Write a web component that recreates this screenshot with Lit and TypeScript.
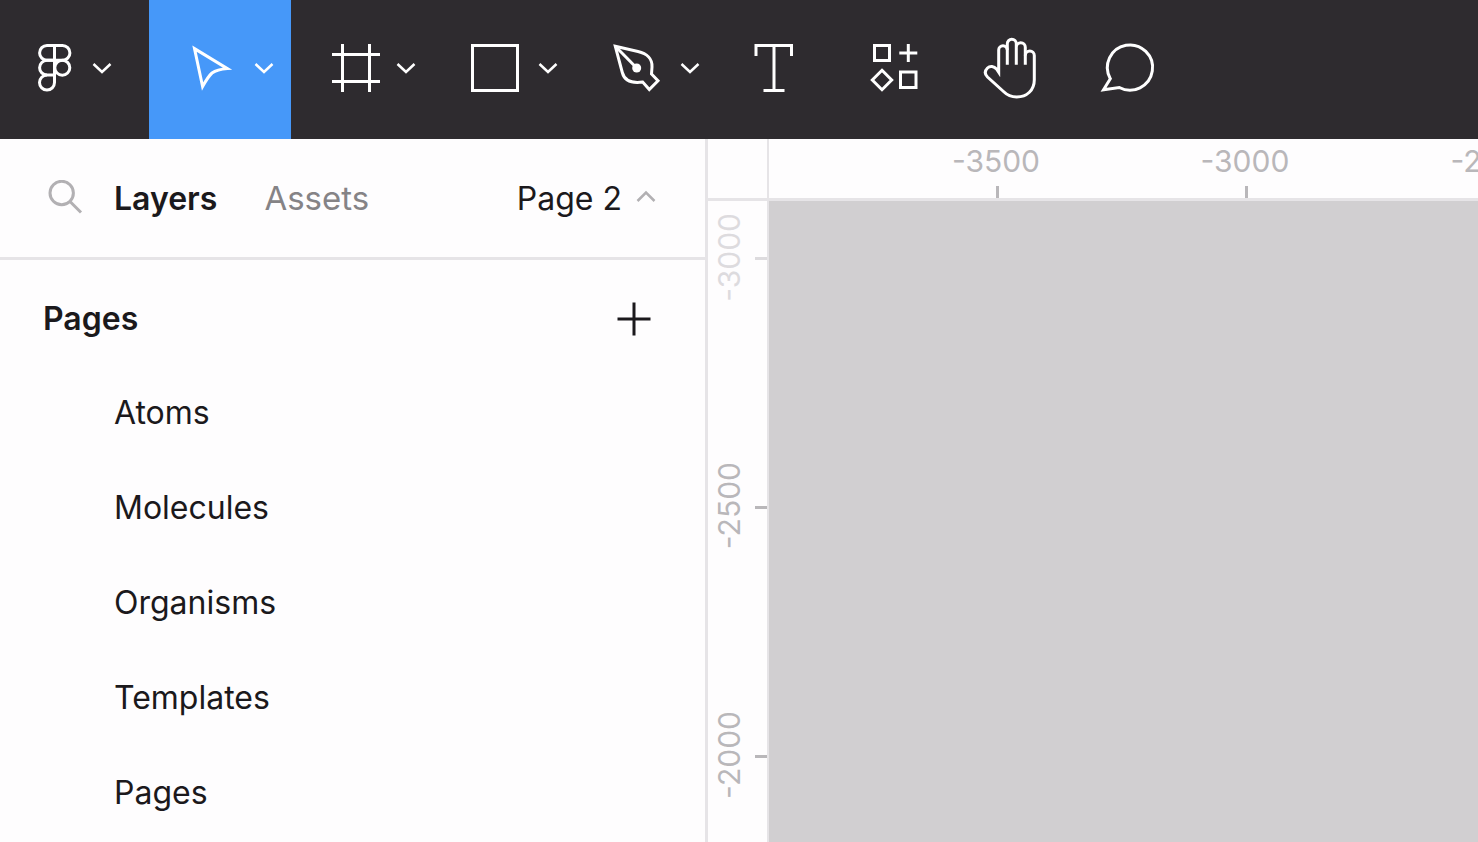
import { LitElement, html, svg, css } from "lit";
import { customElement, property, state } from "lit/decorators.js";
import { classMap } from "lit/directives/class-map.js";

const icons: Record<string, unknown> = {
  menu: svg`<path d="M28 9.5h15.5a7.4 7.4 0 0 1 0 14.8H28a7.4 7.4 0 0 1 0-14.8z"/><path d="M35.5 24.3H28a7.4 7.4 0 0 0 0 14.8h7.5"/><path d="M35.5 9.5v37.1a7.5 7.5 0 1 1-7.5-7.5"/><circle cx="43.3" cy="31.7" r="7.5"/>`,
  move: svg`<path d="M13.5 12.600L46.5 32.6Q36 33.500 31 37Q27.500 40 21.600 50.500Z"/>`,
  frame: svg`<path d="M19.500 8v48M46.500 8v48M9 18.500h48M9 45.500h48"/>`,
  shape: svg`<path d="M7.500 9.500h45v45h-45z"/>`,
  pen: svg`<path d="M8.300 10.300L31 15.500C40 17.500 45.500 23 45 31L44.500 38L51 44.700L42.300 53.500L35.700 46C25 47.500 17.500 45 15.300 36.500Z"/><path d="M8.300 10.300L29.700 32"/><circle cx="29.700" cy="32" r="4.500" fill="currentColor" stroke="none"/>`,
  text: svg`<path d="M13 20V9.500H48.500V20M31 9.500V54.500M20.500 54.500H41.500"/>`,
  resources: svg`<path d="M13.500 9.500h15v15h-15zM39.500 36h15.500v15.500H39.500zM47.300 8v18M38.300 17h18M21 34.300l9.700 9.700l-9.700 9.700l-9.700-9.700z"/>`,
  hand: svg`<path d="M28.300 28.700V14A4.300 4.300 0 0 0 19.700 14V36.300L17.500 33C15 30 11 29.500 8.500 32C5.500 35 5.500 38 8.500 41L24.500 55.500C29 60 33 61 37.700 61C48 61 55.300 54 55.300 44V19.500A4.500 4.500 0 0 0 46.300 19.500"/><path d="M28.300 14V7.800A4.500 4.500 0 0 1 37.300 7.800V28.700M37.300 11.200A4.500 4.500 0 0 1 46.300 11.200V28.700"/>`,
  comment: svg`<path d="M13.300 42.700A22.600 22.600 0 1 1 22.300 51.500L6.500 53.700Z"/>`,
};

interface Tool {
  id: string;
  label: string;
  menu: boolean;
}

const tools: Tool[] = [
  { id: "menu", label: "Main menu", menu: true },
  { id: "move", label: "Move", menu: true },
  { id: "frame", label: "Frame", menu: true },
  { id: "shape", label: "Rectangle", menu: true },
  { id: "pen", label: "Pen", menu: true },
  { id: "text", label: "Text", menu: false },
  { id: "resources", label: "Resources", menu: false },
  { id: "hand", label: "Hand", menu: false },
  { id: "comment", label: "Comment", menu: false },
];

@customElement("tool-button")
class ToolButton extends LitElement {
  @property({ attribute: false }) tool!: Tool;
  @property({ type: Boolean }) active = false;

  static styles = css`
    :host { display: block; flex: none; }
    button {
      display: flex;
      align-items: center;
      gap: 8px;
      box-sizing: border-box;
      height: 100%;
      margin: 0;
      padding: 36px 28px 39px 26px;
      border: 0;
      background: none;
      color: #fff;
    }
    svg { display: block; flex: none; fill: none; stroke: currentColor; }
    .glyph { width: 64px; height: 64px; stroke-width: 3; stroke-miterlimit: 10; }
    .chevron { width: 22px; height: 22px; stroke-width: 2.5; }
    .with-menu { padding-left: 32px; padding-right: 16px; }
    .main { padding-left: 19px; padding-right: 36px; }
    .active { background: #4698f9; }
  `;

  render() {
    const classes = {
      "with-menu": this.tool.menu,
      main: this.tool.id === "menu",
      active: this.active,
    };
    return html`<button class=${classMap(classes)} type="button" aria-label=${this.tool.label} aria-pressed=${this.active}>
      <svg class="glyph" viewBox="0 0 64 64" aria-hidden="true">${icons[this.tool.id]}</svg>
      ${this.tool.menu
        ? html`<svg class="chevron" viewBox="0 0 22 22" aria-hidden="true"><path d="M2.500 7L11 15L19.500 7" /></svg>`
        : null}
    </button>`;
  }
}

@customElement("layers-panel")
class LayersPanel extends LitElement {
  @property({ attribute: false }) pages: string[] = [];

  static styles = css`
    :host { display: block; color: #1b191c; }
    button { margin: 0; padding: 0; border: 0; background: none; color: inherit; font: inherit; text-align: left; }
    svg { display: block; fill: none; stroke: currentColor; stroke-width: 3; }
    .tabs {
      display: flex;
      align-items: baseline;
      height: 79px;
      padding: 39px 48px 0 47px;
      border-bottom: 3px solid #e6e4e7;
    }
    .search { align-self: flex-start; margin: 2px 31px 0 0; color: #b2b0b3; }
    .search svg { width: 36px; height: 36px; }
    .tab { margin-right: 47px; color: #858386; font-size: 33px; }
    .selected { color: #1b191c; font-size: 32px; font-weight: 600; }
    .current { display: flex; align-items: center; gap: 13px; margin-left: auto; }
    .current svg { width: 22px; height: 22px; color: #b2b0b3; stroke-width: 2.500; }
    .heading {
      display: flex;
      align-items: center;
      justify-content: space-between;
      height: 93px;
      padding: 12px 54px 0 43px;
    }
    h2 { margin: 0; font: inherit; font-weight: 600; }
    .add svg { width: 34px; height: 34px; }
    ul { margin: 0; padding: 0; list-style: none; }
    .page { display: block; width: 100%; height: 95px; padding-left: 114px; }
  `;

  render() {
    return html`
      <div class="tabs">
        <button class="search" type="button" aria-label="Search">
          <svg viewBox="0 0 36 36" aria-hidden="true"><circle cx="14.700" cy="13" r="11.700" /><path d="M23 21.500L34 32.500" /></svg>
        </button>
        <button class="tab selected" type="button">Layers</button>
        <button class="tab" type="button">Assets</button>
        <button class="current" type="button" aria-expanded="true">
          Page 2
          <svg viewBox="0 0 22 22" aria-hidden="true"><path d="M2.500 13L11 4.500L19.500 13" /></svg>
        </button>
      </div>
      <div class="heading">
        <h2>Pages</h2>
        <button class="add" type="button" aria-label="Add page">
          <svg viewBox="0 0 34 34" aria-hidden="true"><path d="M.5 17h33M17 .5v33" /></svg>
        </button>
      </div>
      <ul>
        ${this.pages.map((p) => html`<li><button class="page" type="button">${p}</button></li>`)}
      </ul>
    `;
  }
}

@customElement("canvas-view")
class CanvasView extends LitElement {
  static styles = css`
    :host {
      display: grid;
      grid-template-columns: 61px minmax(0, 1fr);
      grid-template-rows: 62px minmax(0, 1fr);
      color: #b9b7ba;
      font-size: 30px;
      line-height: 36px;
    }
    .corner, .top { border-bottom: 3px solid #e6e4e7; }
    .corner, .side { border-right: 2px solid #e6e4e7; }
    .top, .side { display: flex; min-width: 0; min-height: 0; overflow: hidden; }
    .side { flex-direction: column; }
    .mark { display: flex; flex: none; align-items: center; justify-content: space-between; }
    .mark::after { content: ""; background: currentColor; }
    .top .mark { flex-direction: column; width: 249px; padding-top: 4px; }
    .top .mark:first-child { margin-left: 104px; }
    .top .mark::after { width: 3px; height: 12px; }
    .top .value { margin-right: 3px; }
    .side .mark { height: 249px; padding-left: 3px; }
    .side .mark:first-child { margin-top: -67px; color: #dddbde; }
    .side .mark::after { width: 12px; height: 3px; }
    .side .value { margin-bottom: 3px; writing-mode: vertical-rl; transform: rotate(180deg); }
    .surface { background: #d1cfd1; }
  `;

  render() {
    const mark = (n: number) => html`<div class="mark"><span class="value">${n}</span></div>`;
    return html`
      <div class="corner"></div>
      <div class="top">${[-3500, -3000, -2500].map(mark)}</div>
      <div class="side">${[-3000, -2500, -2000].map(mark)}</div>
      <div class="surface"></div>
    `;
  }
}

@customElement("app-root")
class AppRoot extends LitElement {
  @state() private activeTool = "move";
  private pages = ["Atoms", "Molecules", "Organisms", "Templates", "Pages"];

  static styles = css`
    :host {
      display: flex;
      flex-direction: column;
      height: 100vh;
      overflow: hidden;
      background: #fefdfe;
      font: 400 32px/40px Inter, "Liberation Sans", sans-serif;
    }
    .toolbar { display: flex; flex: none; background: #2e2b2f; }
    .workspace { display: flex; flex: 1; min-height: 0; }
    .panel { flex: none; width: 705px; border-right: 3px solid #e6e4e7; }
    .canvas { flex: 1; min-width: 0; }
  `;

  render() {
    return html`
      <header class="toolbar">
        ${tools.map(
          (t) => html`<tool-button .tool=${t} .active=${t.id === this.activeTool} @click=${() => (this.activeTool = t.id)}></tool-button>`
        )}
      </header>
      <main class="workspace">
        <layers-panel class="panel" .pages=${this.pages}></layers-panel>
        <canvas-view class="canvas"></canvas-view>
      </main>
    `;
  }
}
